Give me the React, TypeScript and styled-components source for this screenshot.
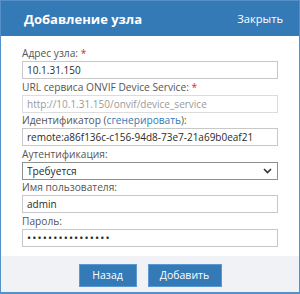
import React from "react";
import styled, { createGlobalStyle } from "styled-components";

const Global = createGlobalStyle`
  html, body { margin: 0; padding: 0; background: #fff; }
  body { font-family: "Open Sans", "Noto Sans", sans-serif; }
  * { box-sizing: border-box; }
`;

const Dialog = styled.div`
  width: 300px;
  height: 294px;
  border: 1px solid #5590c9;
  border-bottom-width: 2px;
  display: flex;
  flex-direction: column;
  background: #fff;
`;

const Header = styled.div`
  height: 35px;
  flex: none;
  background: #337ab7;
  display: flex;
  align-items: center;
  justify-content: space-between;
  padding: 0 16px 0 23px;
  color: #fff;
`;

const Title = styled.h1`
  margin: 0;
  font-size: 13px;
  font-weight: 700;
`;

const Close = styled.span`
  font-size: 11.2px;
  cursor: pointer;
`;

const Body = styled.div`
  padding: 10px 21px 9px;
  display: flex;
  flex-direction: column;
  gap: 0.5px;
`;

const Field = styled.div`
  display: flex;
  flex-direction: column;
`;

const Label = styled.label`
  font-size: 10.2px;
  line-height: 15px;
  color: #555;
`;

const Req = styled.span`
  color: #e8231f;
`;

const Link = styled.a`
  color: #337ab7;
  text-decoration: none;
`;

const Input = styled.input<{ $disabled?: boolean; $secret?: boolean }>`
  display: block;
  height: 18px;
  width: 100%;
  margin: 0;
  padding: 0 4px;
  border: 1px solid ${(p) => (p.$disabled ? "#dcdcdc" : "#c8c8c8")};
  border-radius: 0;
  background: #fff;
  font-family: "Open Sans", "Noto Sans", sans-serif;
  font-size: ${(p) => (p.$secret ? "11px" : "10px")};
  letter-spacing: ${(p) => (p.$secret ? "1.1px" : "0")};
  color: ${(p) => (p.$disabled ? "#9a9a9a" : "#2a2a2a")};
  outline: none;
`;

const SelectWrap = styled.div`
  position: relative;
  height: 18px;
`;

const Select = styled.select`
  display: block;
  appearance: none;
  -webkit-appearance: none;
  width: 100%;
  height: 18px;
  margin: 0;
  padding: 0 4px;
  border: 1px solid #8f8f8f;
  border-radius: 0;
  background: #fff;
  font-family: "Open Sans", "Noto Sans", sans-serif;
  font-size: 10.2px;
  line-height: 16px;
  color: #2a2a2a;
  outline: none;
`;

const Chevron = styled.svg`
  position: absolute;
  right: 6px;
  top: 6px;
  pointer-events: none;
`;

const Footer = styled.div`
  flex: 1;
  background: #f1f2f6;
  display: flex;
  justify-content: center;
  align-items: flex-start;
  gap: 11px;
  padding-top: 8px;
`;

const Button = styled.button<{ $w: number }>`
  width: ${(p) => p.$w}px;
  height: 23px;
  border: 1px solid #5b98d2;
  border-radius: 0;
  background: #337ab7;
  color: #fff;
  font-family: "Open Sans", "Noto Sans", sans-serif;
  font-size: 10.5px;
  padding: 0;
  cursor: pointer;
`;

export default function App() {
  return (
    <>
      <Global />
      <Dialog>
        <Header>
          <Title>Добавление узла</Title>
          <Close>Закрыть</Close>
        </Header>
        <Body>
          <Field>
            <Label>
              Адрес узла: <Req>*</Req>
            </Label>
            <Input readOnly defaultValue="10.1.31.150" />
          </Field>
          <Field>
            <Label>
              URL сервиса ONVIF Device Service: <Req>*</Req>
            </Label>
            <Input $disabled readOnly defaultValue="http://10.1.31.150/onvif/device_service" />
          </Field>
          <Field>
            <Label>
              Идентификатор (<Link href="#">сгенерировать</Link>):
            </Label>
            <Input readOnly defaultValue="remote:a86f136c-c156-94d8-73e7-21a69b0eaf21" />
          </Field>
          <Field>
            <Label>Аутентификация:</Label>
            <SelectWrap>
              <Select defaultValue="req">
                <option value="req">Требуется</option>
                <option value="none">Не требуется</option>
              </Select>
              <Chevron width="9" height="6" viewBox="0 0 9 6">
                <path d="M1 1l3.5 3.5L8 1" fill="none" stroke="#333" strokeWidth="1.6" />
              </Chevron>
            </SelectWrap>
          </Field>
          <Field>
            <Label>Имя пользователя:</Label>
            <Input readOnly defaultValue="admin" />
          </Field>
          <Field>
            <Label>Пароль:</Label>
            <Input $secret type="password" readOnly defaultValue="1234567890123456" />
          </Field>
        </Body>
        <Footer>
          <Button $w={58}>Назад</Button>
          <Button $w={74}>Добавить</Button>
        </Footer>
      </Dialog>
    </>
  );
}
